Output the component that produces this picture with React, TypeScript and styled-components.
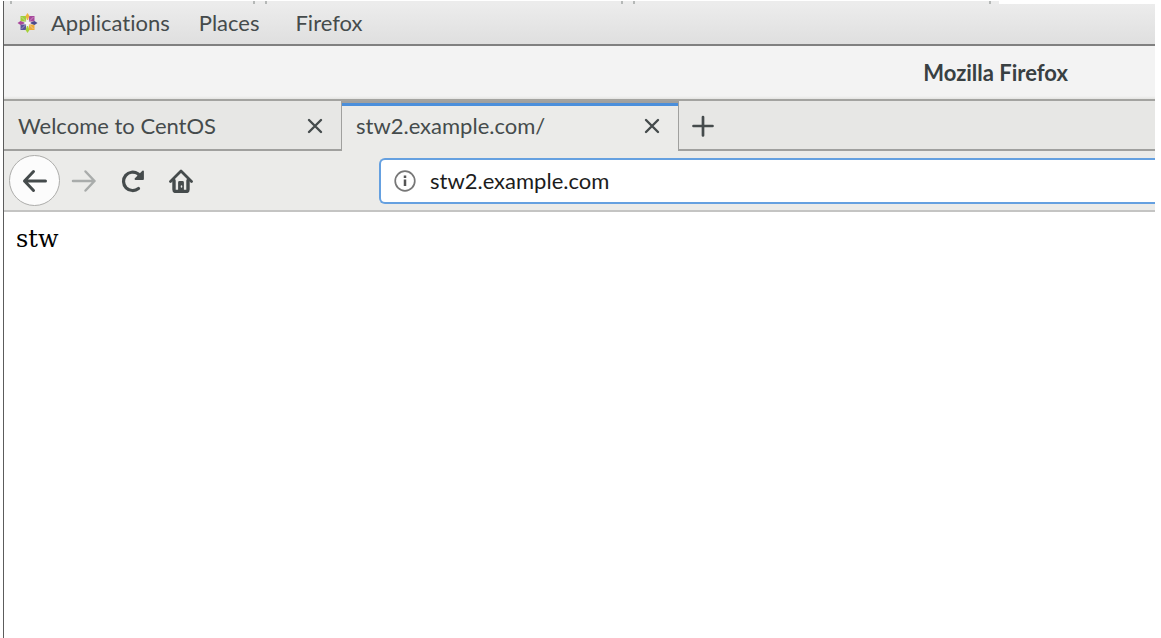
import React from "react";
import styled, { createGlobalStyle, css } from "styled-components";

const GlobalStyle = createGlobalStyle`
  *, *::before, *::after { box-sizing: border-box; }
  html, body { margin: 0; background: #fff; }
  body { font-family: Lato, "Open Sans", sans-serif; font-size: 22px; line-height: 28px; font-variant-ligatures: none; color: #454b4c; overflow: hidden; }
  button, input { font: inherit; font-variant-ligatures: none; color: inherit; }
`;

const Screen = styled.div`
  display: flex;
  flex-direction: column;
  min-height: 100vh;
  padding: 1px 6px 0 3px;
`;

const Desktop = styled.div`
  flex: 1;
  display: flex;
  flex-direction: column;
  min-width: 0;
  border-left: 1px solid #5c5c5c;
`;

const BackgroundTabs = styled.div`
  display: flex;
  height: 3px;
  padding-left: 6px;
  background: linear-gradient(90deg, #ececec 995px, #fff 995px);
`;

const BackgroundTab = styled.span<{ $width: number }>`
  flex: none;
  width: ${(p) => p.$width}px;
  margin-right: 10px;
  border: solid #b5b8b7;
  border-width: 0 2px;
`;

const PanelBar = styled.nav`
  display: flex;
  align-items: center;
  height: 42px;
  padding: 0 12px 2px;
  border-bottom: 2px solid #808080;
  background: linear-gradient(#ececec, #dfdfdf);
`;

const PanelItem = styled.button<{ $gap?: number }>`
  display: flex;
  align-items: center;
  gap: 12px;
  margin-right: ${(p) => p.$gap ?? 0}px;
  padding: 0;
  border: 0;
  background: none;
`;

const TitleBar = styled.header`
  display: flex;
  align-items: center;
  justify-content: flex-end;
  height: 55px;
  padding-right: 87px;
  border-bottom: 2px solid #a3a3a0;
  background: linear-gradient(#f3f3f3 50px, #e4e4e2);
`;

const Title = styled.h1`
  margin: 0;
  font-size: 22px;
  line-height: 28px;
  font-weight: 700;
  color: #394042;
`;

const TabStrip = styled.div`
  display: flex;
  height: 50px;
  background: #e7e7e5;
`;

const TabItem = styled.div<{ $active?: boolean }>`
  display: flex;
  align-items: center;
  justify-content: space-between;
  flex: none;
  width: 337px;
  padding: 2px 18px 0 14px;
  border-bottom: 2px solid #a0a09e;
  ${(p) =>
    p.$active &&
    css`
      width: 338px;
      padding: 0 18px 0 14px;
      border: solid #a0a09e;
      border-width: 0 1px;
      background: linear-gradient(#a0a09e 2px, #4b8fdb 2px 5px, #ebebe9 5px);
    `}
`;

const PlainButton = styled.button`
  display: flex;
  align-items: center;
  padding: 0;
  border: 0;
  background: none;
  white-space: nowrap;
  &:disabled { color: #a9acab; }
`;

const StripRest = styled.div`
  display: flex;
  flex: 1;
  align-items: center;
  padding: 2px 12px 0;
  border-bottom: 2px solid #a0a09e;
`;

const Toolbar = styled.div`
  display: flex;
  align-items: center;
  height: 61px;
  padding-left: 5px;
  border-bottom: 2px solid #c4c4c3;
  background: #ebebe9;
`;

const Navigation = styled.div`
  display: flex;
  align-items: center;
  flex: none;
  width: 370px;
  gap: 24px;
`;

const BackButton = styled(PlainButton)`
  justify-content: center;
  width: 51px;
  height: 51px;
  margin-right: -13px;
  border: 1px solid #adadab;
  border-radius: 50%;
  background: #fcfcfc;
`;

const AddressBox = styled.label`
  display: flex;
  align-items: center;
  gap: 14px;
  flex: 1;
  min-width: 0;
  height: 46px;
  padding-left: 13px;
  border: 2px solid #65a0e0;
  border-right: 0;
  border-radius: 6px 0 0 6px;
  background: #fff;
`;

const AddressInput = styled.input`
  flex: 1;
  min-width: 0;
  padding: 0;
  border: 0;
  outline: 0;
  background: none;
  color: #1c1c1c;
`;

const Page = styled.main`
  flex: 1;
  padding: 13px 12px;
  background: #fff;
  color: #000;
  font-family: "DejaVu Serif", serif;
  font-size: 24px;
`;

const Icon = styled.svg`
  display: block;
  flex: none;
  fill: none;
  stroke: currentColor;
`;

const CentosLogo = () => (
  <Icon width="23" height="22" viewBox="0 0 22 22" aria-hidden="true">
    <g stroke="none">
      <path d="M4 4h5.500v5.500H4z" fill="#9fcf3c" />
      <path d="M12.500 4H18v5.500h-5.500z" fill="#a8489c" />
      <path d="M4 12.500h5.500V18H4z" fill="#5a569b" />
      <path d="M12.500 12.500H18V18h-5.500z" fill="#f0ac38" />
      <path d="M11 1l2 3-2 5-2-5z" fill="#efb43c" />
      <path d="M21 11l-3 2-5-2 5-2z" fill="#4b4a8c" />
      <path d="M11 21l-2-3 2-5 2 5z" fill="#a5d138" />
      <path d="M1 11l3-2 5 2-5 2z" fill="#a8489c" />
    </g>
    <path d="M11 8v6M8 11h6" stroke="#f8f2f2" strokeWidth="2" />
    <path d="M5 5l4 4M17 5l-4 4M5 17l4-4M17 17l-4-4" stroke="#e8dfe6" strokeOpacity="0.5" />
  </Icon>
);

const CloseIcon = () => (
  <Icon width="16" height="16" viewBox="0 0 16 16" strokeWidth="2.4" strokeLinecap="round" aria-hidden="true">
    <path d="M2 2l12 12M14 2L2 14" />
  </Icon>
);

const PlusIcon = () => (
  <Icon width="24" height="24" viewBox="0 0 24 24" strokeWidth="2.7" strokeLinecap="round" aria-hidden="true">
    <path d="M12 3v18.500M2.500 12h19" />
  </Icon>
);

const BackIcon = () => (
  <Icon width="26" height="24" viewBox="0 0 26 24" strokeWidth="3" strokeLinecap="round" strokeLinejoin="round" aria-hidden="true">
    <path d="M23.500 12H2.500M11.500 2.500L2.500 12l9 9.500" />
  </Icon>
);

const ForwardIcon = () => (
  <Icon width="26" height="24" viewBox="0 0 26 24" strokeWidth="2.5" strokeLinecap="round" strokeLinejoin="round" aria-hidden="true">
    <path d="M2 12h21.500M14.500 2.500l9 9.500-9 9.500" />
  </Icon>
);

const ReloadIcon = () => (
  <Icon width="24" height="24" viewBox="0 0 24 24" strokeWidth="3.200" strokeLinecap="round" aria-hidden="true">
    <path d="M17.500 19.500A9.200 9.200 0 1 1 17 4.800l2.500 2.500" />
    <path d="M22 2.500V10h-7.500z" fill="currentColor" strokeWidth="1.800" strokeLinejoin="round" />
  </Icon>
);

const HomeIcon = () => (
  <Icon width="24" height="24" viewBox="0 0 24 24" strokeWidth="2.800" strokeLinecap="round" strokeLinejoin="round" aria-hidden="true">
    <path d="M1.500 12.500L12 2l10.500 10.500" />
    <path d="M5 11.500v9q0 2 2 2h10q2 0 2-2v-9" strokeWidth="3.400" />
    <path d="M10.500 22v-8.500h3V22z" fill="currentColor" />
    <path d="M12.500 17v1" stroke="#ebebe9" strokeWidth="1.500" />
  </Icon>
);

const InfoIcon = () => (
  <Icon width="22" height="22" viewBox="0 0 22 22" strokeWidth="1.700" aria-hidden="true">
    <circle cx="11" cy="11" r="9.800" stroke="#777" />
    <path d="M11 9.500v6.500M11 5.500v2.500" stroke="#555" strokeWidth="2.500" />
  </Icon>
);

const tabs = [
  { title: "Welcome to CentOS", active: false },
  { title: "stw2.example.com/", active: true },
];

export default function App() {
  return (
    <>
      <GlobalStyle />
      <Screen>
        <Desktop>
          <BackgroundTabs>
            <BackgroundTab $width={245} />
            <BackgroundTab $width={358} />
            <BackgroundTab $width={358} />
          </BackgroundTabs>
          <PanelBar>
            <PanelItem $gap={29}>
              <CentosLogo />
              Applications
            </PanelItem>
            <PanelItem $gap={36}>Places</PanelItem>
            <PanelItem>Firefox</PanelItem>
          </PanelBar>
          <TitleBar>
            <Title>Mozilla Firefox</Title>
          </TitleBar>
          <TabStrip>
            {tabs.map((tab) => (
              <TabItem key={tab.title} $active={tab.active}>
                <PlainButton>{tab.title}</PlainButton>
                <PlainButton aria-label={`Close ${tab.title}`}>
                  <CloseIcon />
                </PlainButton>
              </TabItem>
            ))}
            <StripRest>
              <PlainButton aria-label="Open a new tab">
                <PlusIcon />
              </PlainButton>
            </StripRest>
          </TabStrip>
          <Toolbar>
            <Navigation>
              <BackButton aria-label="Back">
                <BackIcon />
              </BackButton>
              <PlainButton aria-label="Forward" disabled>
                <ForwardIcon />
              </PlainButton>
              <PlainButton aria-label="Reload">
                <ReloadIcon />
              </PlainButton>
              <PlainButton aria-label="Home">
                <HomeIcon />
              </PlainButton>
            </Navigation>
            <AddressBox>
              <InfoIcon />
              <AddressInput aria-label="Address" defaultValue="stw2.example.com" spellCheck={false} />
            </AddressBox>
          </Toolbar>
          <Page>stw</Page>
        </Desktop>
      </Screen>
    </>
  );
}
